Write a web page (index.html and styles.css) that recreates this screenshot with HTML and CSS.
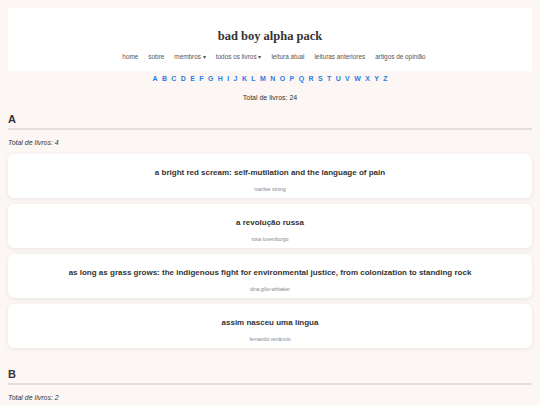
FILE: index.html
```html
<!DOCTYPE html>
<html lang="pt">
<head>
	<meta charset="UTF-8">
	<title>bad boy alpha pack - todos os livros</title>
	<link rel="stylesheet" href="styles.css">
</head>
<body>
	<header class="site-header">
		<h1 class="site-title">bad boy alpha pack</h1>
		<nav class="nav">
			<a href="#">home</a>
			<a href="#">sobre</a>
			<a href="#">membros &#9662;</a>
			<a href="#">todos os livros &#9662;</a>
			<a href="#">leitura atual</a>
			<a href="#">leituras anteriores</a>
			<a href="#">artigos de opinião</a>
		</nav>
	</header>

	<div class="alpha">
		<a href="#A">A</a><a href="#B">B</a><a href="#C">C</a><a href="#D">D</a><a href="#E">E</a><a href="#F">F</a><a href="#G">G</a><a href="#H">H</a><a href="#I">I</a><a href="#J">J</a><a href="#K">K</a><a href="#L">L</a><a href="#M">M</a><a href="#N">N</a><a href="#O">O</a><a href="#P">P</a><a href="#Q">Q</a><a href="#R">R</a><a href="#S">S</a><a href="#T">T</a><a href="#U">U</a><a href="#V">V</a><a href="#W">W</a><a href="#X">X</a><a href="#Y">Y</a><a href="#Z">Z</a>
	</div>
	<p class="total">Total de livros: 24</p>

	<!-- letra A -->
	<section class="letter" id="A">
		<h2 class="letter-title">A</h2>
		<p class="count">Total de livros: 4</p>
		<div class="card">
			<div class="book-title">a bright red scream: self-mutilation and the language of pain</div>
			<div class="book-author">marilee strong</div>
		</div>
		<div class="card">
			<div class="book-title">a revolução russa</div>
			<div class="book-author">rosa luxemburgo</div>
		</div>
		<div class="card">
			<div class="book-title">as long as grass grows: the indigenous fight for environmental justice, from colonization to standing rock</div>
			<div class="book-author">dina gilio-whitaker</div>
		</div>
		<div class="card">
			<div class="book-title">assim nasceu uma língua</div>
			<div class="book-author">fernando venâncio</div>
		</div>
	</section>

	<!-- letra B -->
	<section class="letter" id="B">
		<h2 class="letter-title">B</h2>
		<p class="count">Total de livros: 2</p>
	</section>
</body>
</html>
```

FILE: styles.css
```css
*{
	margin:0;
	padding:0;
	box-sizing:border-box;
}
body{
	padding:8px;
	background:#fcf7f4;
	font-family:"Liberation Sans", Arial, sans-serif;
	color:#333;
}
a{
	text-decoration:none;
}
/**顶部白色头部**/
.site-header{
	background:#fff;
	text-align:center;
	padding:21px 0 10px;
}
.site-title{
	font-family:"Liberation Serif", "Times New Roman", serif;
	font-size:12.5px;
	font-weight:bold;
	color:#333;
	margin-bottom:9px;
}
.nav{
	display:flex;
	justify-content:center;
	gap:10px;
	font-size:6.4px;
	padding-left:8px;
}
.nav a{
	color:#555;
}
/**字母导航**/
.alpha{
	display:flex;
	justify-content:center;
	gap:4.4px;
	margin-top:4px;
	font-size:7px;
	font-weight:bold;
}
.alpha a{
	color:#2b7de0;
}
.total{
	text-align:center;
	font-size:7px;
	margin:12px 0 12px;
}
.letter{
	margin-bottom:20px;
}
.letter-title{
	font-size:11px;
	font-weight:bold;
	padding-bottom:3px;
	border-bottom:2px solid #e2dedb;
}
.count{
	font-size:7px;
	font-style:italic;
	margin:9px 0 8px;
}
.card{
	background:#fff;
	border-radius:6px;
	box-shadow:0 1px 4px rgba(0,0,0,0.08);
	height:44px;
	margin-bottom:6px;
	text-align:center;
	padding-top:14px;
}
.book-title{
	font-size:8px;
	font-weight:bold;
	color:#333;
}
.book-author{
	font-size:5px;
	color:#888;
	margin-top:9px;
}
```
